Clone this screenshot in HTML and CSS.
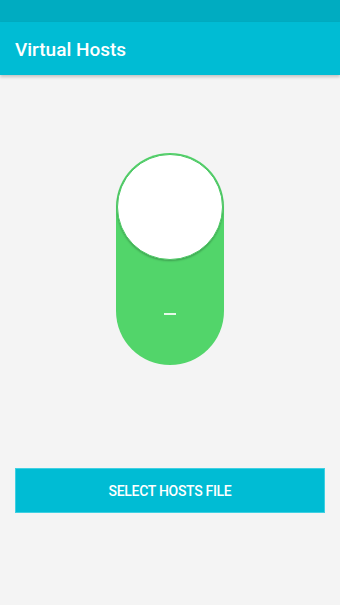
FILE: index.html
```html
<!DOCTYPE html>
<html lang="en">
<head>
    <meta charset="UTF-8">
    <meta name="viewport" content="width=device-width, initial-scale=1.0">
    <title>Virtual Hosts</title>
    <link rel="stylesheet" href="styles.css">
</head>
<body>
    <div class="status-bar"></div>
    <div class="toolbar">
        <h1>Virtual Hosts</h1>
    </div>

    <div class="content">
        <div class="switch">
            <div class="knob"></div>
            <div class="minus"></div>
        </div>

        <button class="select-btn">SELECT HOSTS FILE</button>
    </div>
</body>
</html>
```

FILE: styles.css
```css
* {
    box-sizing: border-box;
    margin: 0;
    padding: 0;
}
body {
    font-family: Roboto, 'Liberation Sans', sans-serif;
    background-color: #f4f4f4;
    width: 340px;
    height: 605px;
    overflow: hidden;
}
.status-bar {
    height: 22px;
    background-color: #00acc1;
}
.toolbar {
    height: 53px;
    background-color: #00bcd4;
    display: flex;
    align-items: center;
    padding-left: 15px;
    box-shadow: 0px 2px 3px rgba(0, 0, 0, 0.2);
    position: relative;
}
.toolbar h1 {
    color: #fff;
    font-size: 19px;
    font-weight: 500;
    margin-top: 2px;
}
.content {
    display: flex;
    flex-direction: column;
    align-items: center;
    padding-top: 78px;
}
.switch {
    width: 108px;
    height: 212px;
    border-radius: 54px;
    background-color: #52d56a;
    display: flex;
    flex-direction: column;
    align-items: center;
    padding-top: 1px;
}
.knob {
    width: 106px;
    height: 106px;
    border-radius: 50%;
    background-color: #fff;
    border: 1px solid #4cc864;
    box-shadow: 0px 1px 2px rgba(0, 0, 0, 0.25);
}
.minus {
    width: 12px;
    height: 1.5px;
    background-color: rgba(255, 255, 255, 0.85);
    margin-top: 53px;
}
.select-btn {
    margin-top: 103px;
    width: 310px;
    height: 45px;
    background-color: #00bcd4;
    color: #fff;
    border: 1px solid #3fd0e2;
    font-family: Roboto, 'Liberation Sans', sans-serif;
    font-size: 14px;
    font-weight: 500;
    letter-spacing: -0.3px;
    cursor: pointer;
}
```
